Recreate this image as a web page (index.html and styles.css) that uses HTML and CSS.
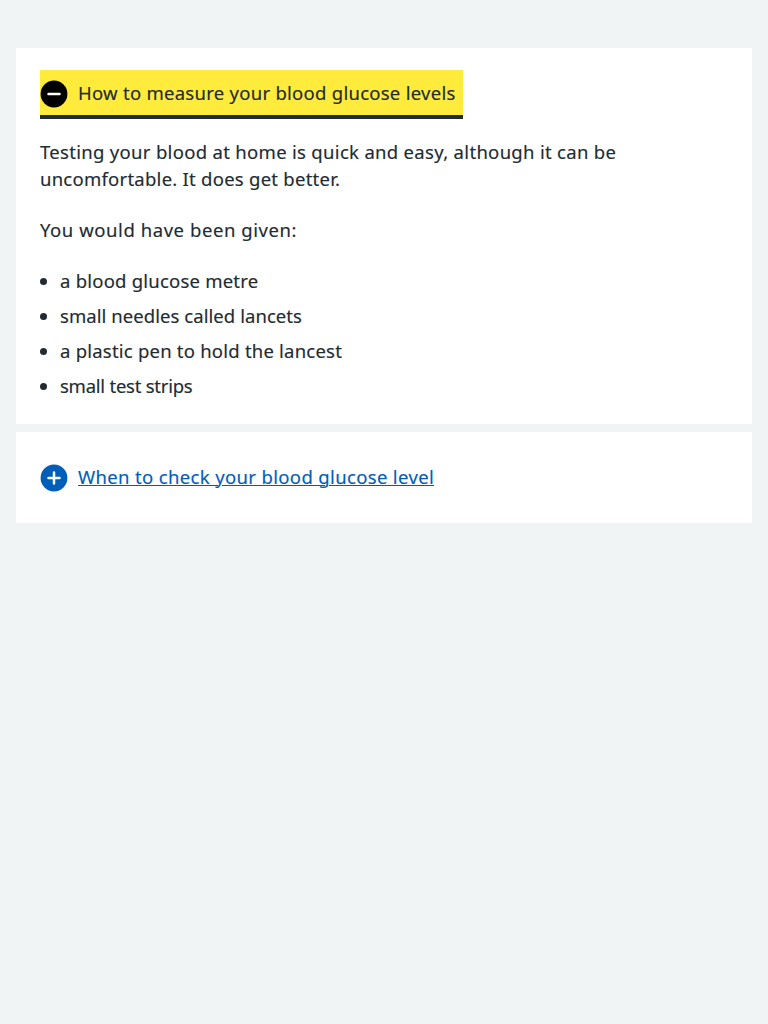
FILE: index.html
```html
<!DOCTYPE html>
<html lang="en">
<head>
<meta charset="utf-8">
<title>Blood glucose</title>
<link rel="stylesheet" href="styles.css">
</head>
<body>
<main class="group">
  <details class="expander" open>
    <summary class="summary">
      <span class="label label-focus">
        <svg class="icon" viewBox="0 0 28 28"><circle cx="14" cy="14" r="13.4" fill="#000"/><path d="M8.5 14h11" stroke="#fff" stroke-width="2.5" stroke-linecap="round"/></svg>
        <span class="title w-measure">How to measure your blood glucose levels</span>
      </span>
    </summary>
    <div class="content">
      <p><span class="w-p1">Testing your blood at home is quick and easy, although it can be</span><br><span class="w-p2">uncomfortable. It does get better.</span></p>
      <p><span class="w-p3">You would have been given:</span></p>
      <ul class="list">
        <li><span class="w-l1">a blood glucose metre</span></li>
        <li><span class="w-l2">small needles called lancets</span></li>
        <li><span class="w-l3">a plastic pen to hold the lancest</span></li>
        <li><span class="w-l4">small test strips</span></li>
      </ul>
    </div>
  </details>
  <details class="expander">
    <summary class="summary">
      <span class="label">
        <svg class="icon" viewBox="0 0 28 28"><circle cx="14" cy="14" r="13.4" fill="#005eb8"/><path d="M8.5 14h11M14 8.5v11" stroke="#fff" stroke-width="2.5" stroke-linecap="round"/></svg>
        <span class="title link w-when">When to check your blood glucose level</span>
      </span>
    </summary>
  </details>
</main>
</body>
</html>
```
FILE: styles.css
```css
* { box-sizing: border-box; }
body {
  margin: 0;
  background: #f0f4f5;
  color: #212b32;
  font: 18.5px/27px "Noto Sans", sans-serif;
  -webkit-text-stroke: 0.15px;
}
.group { padding: 48px 16px; display: flex; flex-direction: column; gap: 8px; }
.expander { background: #fff; }
.summary { display: block; padding: 22px 24px; }
.label { display: flex; width: fit-content; height: 47px; align-items: center; gap: 10px; padding-right: 8px; white-space: nowrap; }
.label-focus { width: 423px; background: #ffeb3b; height: 45px; padding-top: 2px; box-shadow: 0 4px #212b32; }
.icon { width: 28px; height: 28px; flex: none; }
.title { padding-bottom: 3px; }
.link { color: #005eb8; text-decoration: underline; text-decoration-thickness: 1px; text-underline-offset: 1px; }
.content { padding: 1px 24px 25px; }
p { margin: 0 0 24px; white-space: nowrap; }
.list { margin: 0; padding: 0 0 0 20px; list-style: disc; }
.list li { margin-bottom: 8px; }
.list li:last-child { margin-bottom: 0; }

/* Tracking per line of copy */
.w-measure { letter-spacing: 0.27px; }
.w-when { letter-spacing: 0.35px; }
.w-p1 { letter-spacing: 0.31px; }
.w-p2 { letter-spacing: 0.25px; }
.w-p3 { letter-spacing: 0.56px; }
.w-l1 { letter-spacing: 0.22px; }
.w-l2 { letter-spacing: 0.06px; }
.w-l3 { letter-spacing: 0.22px; }
.w-l4 { letter-spacing: -0.24px; }
```
